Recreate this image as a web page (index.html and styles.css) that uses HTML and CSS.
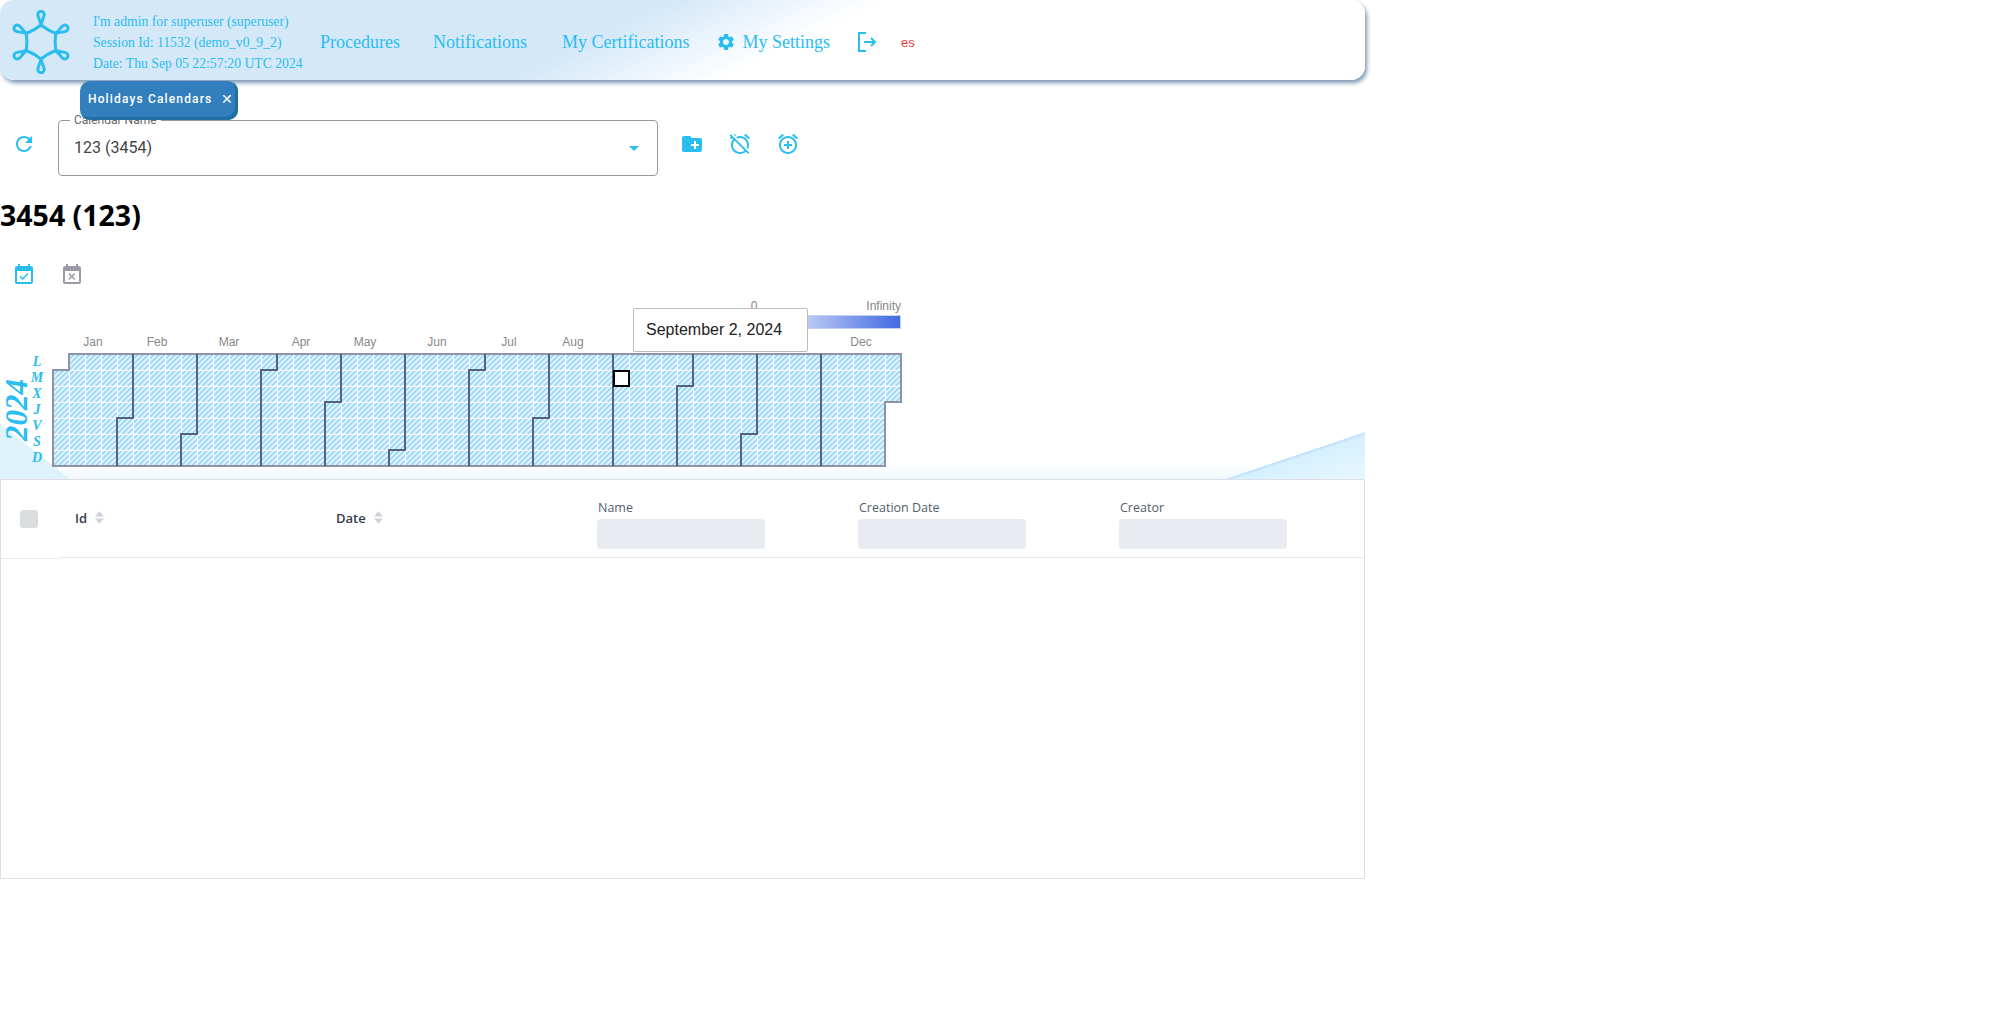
FILE: index.html
```html
<!DOCTYPE html>
<html lang="en">
<head>
  <meta charset="UTF-8" />
  <title>Holidays Calendars</title>
  <link rel="stylesheet" href="styles.css">
</head>
<body>
<div class="page">

  <!-- Top bar -->
  <header class="topbar">
    <svg class="logo" viewBox="-32 -32 64 64">
      <defs>
        <g id="logoArm">
          <path d="M0 -17C1 -22 3.2 -25 3.2 -27.5A3.2 3.2 0 0 0 -3.2 -27.5C-3.2 -25 -1 -22 0 -17" />
          <path d="M0 -17Q7 -11.5 14.7 -8.5" />
        </g>
      </defs>
      <use href="#logoArm" />
      <use href="#logoArm" transform="rotate(60)" />
      <use href="#logoArm" transform="rotate(120)" />
      <use href="#logoArm" transform="rotate(180)" />
      <use href="#logoArm" transform="rotate(240)" />
      <use href="#logoArm" transform="rotate(300)" />
    </svg>
    <div class="session-info">
      <div>I'm admin for superuser (superuser)</div>
      <div>Session Id: 11532 (demo_v0_9_2)</div>
      <div>Date: Thu Sep 05 22:57:20 UTC 2024</div>
    </div>
    <nav class="nav">
      <a class="nav-procedures">Procedures</a>
      <a class="nav-notifications">Notifications</a>
      <a class="nav-certs">My Certifications</a>
      <a class="nav-settings">
        <svg class="icon-cog" viewBox="0 0 24 24"><path d="M19.14 12.94c.04-.3.06-.61.06-.94 0-.32-.02-.64-.07-.94l2.03-1.58c.18-.14.23-.41.12-.61l-1.92-3.32c-.12-.22-.37-.29-.59-.22l-2.39.96c-.5-.38-1.03-.7-1.62-.94l-.36-2.54c-.04-.24-.24-.41-.48-.41h-3.84c-.24 0-.43.17-.47.41l-.36 2.54c-.59.24-1.13.57-1.62.94l-2.39-.96c-.22-.08-.47 0-.59.22L2.74 8.87c-.12.21-.08.47.12.61l2.03 1.58c-.05.3-.09.63-.09.94s.02.64.07.94l-2.03 1.58c-.18.14-.23.41-.12.61l1.92 3.32c.12.22.37.29.59.22l2.39-.96c.5.38 1.03.7 1.62.94l.36 2.54c.05.24.24.41.48.41h3.84c.24 0 .44-.17.47-.41l.36-2.54c.59-.24 1.13-.56 1.62-.94l2.39.96c.22.08.47 0 .59-.22l1.92-3.32c.12-.22.07-.47-.12-.61l-2.01-1.58zM12 15.6c-1.98 0-3.6-1.62-3.6-3.6s1.62-3.6 3.6-3.6 3.6 1.62 3.6 3.6-1.62 3.6-3.6 3.6z"/></svg>
        My Settings
      </a>
      <svg class="icon-logout" viewBox="0 0 20 20"><path d="M9 1H2V19H9M7 10H18M14 6L18 10L14 14" /></svg>
      <span class="lang">es</span>
    </nav>
  </header>

  <!-- Tabs -->
  <div class="tabs">
    <div class="tab">Holidays Calendars <span class="tab-close">✕</span></div>
  </div>

  <!-- Calendar selector -->
  <div class="toolbar">
    <svg class="icon" viewBox="0 0 24 24"><path d="M17.65 6.35C16.2 4.9 14.21 4 12 4c-4.42 0-7.99 3.58-7.99 8s3.57 8 7.99 8c3.73 0 6.84-2.55 7.73-6h-2.08c-.82 2.33-3.04 4-5.65 4-3.31 0-6-2.69-6-6s2.69-6 6-6c1.66 0 3.14.69 4.22 1.78L13 11h7V4l-2.35 2.35z"/></svg>
    <div class="select">
      <span class="select-label">Calendar Name</span>
      <span class="select-value">123 (3454)</span>
      <span class="select-arrow"></span>
    </div>
    <div class="toolbar-actions">
      <svg class="icon" viewBox="0 0 24 24"><path d="M20 6h-8l-2-2H4c-1.11 0-1.99.89-1.99 2L2 18c0 1.11.89 2 2 2h16c1.11 0 2-.89 2-2V8c0-1.11-.89-2-2-2zm-1 8h-3v3h-2v-3h-3v-2h3V9h2v3h3v2z"/></svg>
      <svg class="icon" viewBox="0 0 24 24"><path d="M12 6c3.87 0 7 3.13 7 7 0 .84-.16 1.65-.43 2.4l1.52 1.52c.58-1.19.91-2.51.91-3.92 0-4.97-4.03-9-9-9-1.41 0-2.73.33-3.92.91L9.6 6.43C10.35 6.16 11.16 6 12 6zm10-.28l-4.6-3.86-1.29 1.53 4.6 3.86zM2.92 2.29L1.65 3.57 3 4.9l-1.11.93 1.42 1.42 1.11-.94.8.8C3.83 8.69 3 10.75 3 13c0 4.97 4.02 9 9 9 2.25 0 4.31-.83 5.89-2.2l2.2 2.2 1.27-1.27L3.89 3.27l-.97-.98zm13.55 16.1C15.26 19.39 13.7 20 12 20c-3.87 0-7-3.13-7-7 0-1.7.61-3.26 1.61-4.47l9.86 9.86zM8.02 3.28L6.6 1.86l-.86.71 1.42 1.42z"/></svg>
      <svg class="icon" viewBox="0 0 24 24"><path d="M7.88 3.39L6.6 1.86 2 5.71l1.29 1.53 4.59-3.85zM22 5.72l-4.6-3.86-1.29 1.53 4.6 3.86L22 5.72zM12 4c-4.97 0-9 4.03-9 9s4.02 9 9 9c4.97 0 9-4.03 9-9s-4.03-9-9-9zm0 16c-3.87 0-7-3.13-7-7s3.13-7 7-7 7 3.13 7 7-3.13 7-7 7zm1-11h-2v3H8v2h3v3h2v-3h3v-2h-3V9z"/></svg>
    </div>
  </div>

  <h2 class="calendar-title">3454 (123)</h2>

  <div class="day-actions">
    <svg class="icon" viewBox="0 0 24 24"><path d="M16.53 11.06L15.47 10l-4.88 4.88-2.12-2.12-1.06 1.06L10.59 17l5.94-5.94zM19 3h-1V1h-2v2H8V1H6v2H5c-1.11 0-1.99.9-1.99 2L3 19c0 1.1.89 2 2 2h14c1.1 0 2-.9 2-2V5c0-1.1-.9-2-2-2zm0 16H5V8h14v11z"/></svg>
    <svg class="icon icon-muted" viewBox="0 0 24 24"><path d="M9.31 17l2.44-2.44L14.19 17l1.06-1.06-2.44-2.44 2.44-2.44L14.19 10l-2.44 2.44L9.31 10l-1.06 1.06 2.44 2.44-2.44 2.44L9.31 17zM19 3h-1V1h-2v2H8V1H6v2H5c-1.11 0-1.99.9-1.99 2L3 19c0 1.1.89 2 2 2h14c1.1 0 2-.9 2-2V5c0-1.1-.9-2-2-2zm0 16H5V8h14v11z"/></svg>
  </div>

  <!-- Year heatmap -->
  <section class="heatmap">
    <svg class="heatmap-svg" width="920" height="179" viewBox="0 0 920 179">
      <defs>
        <pattern id="cell" x="53" y="54" width="16" height="16" patternUnits="userSpaceOnUse">
          <rect width="16" height="16" fill="#e6f3fd" />
          <path d="M0 5.33L5.33 0M0 10.67L10.67 0M0 16L16 0M5.33 16L16 5.33M10.67 16L16 10.67" stroke="#98daf7" stroke-width="1.8" />
          <path d="M0 0H16M0 0V16" stroke="#fbfdff" stroke-width="2" />
        </pattern>
        <linearGradient id="legendScale">
          <stop offset="0" stop-color="#ffffff" />
          <stop offset="1" stop-color="#4169e1" />
        </linearGradient>
      </defs>

      <text class="year" transform="translate(27 141) rotate(-90)">2024</text>
      <text class="weekday" x="37" y="66">L</text>
      <text class="weekday" x="37" y="82">M</text>
      <text class="weekday" x="37" y="98">X</text>
      <text class="weekday" x="37" y="114">J</text>
      <text class="weekday" x="37" y="130">V</text>
      <text class="weekday" x="37" y="146">S</text>
      <text class="weekday" x="37" y="162">D</text>

      <text class="month" x="93" y="46">Jan</text>
      <text class="month" x="157" y="46">Feb</text>
      <text class="month" x="229" y="46">Mar</text>
      <text class="month" x="301" y="46">Apr</text>
      <text class="month" x="365" y="46">May</text>
      <text class="month" x="437" y="46">Jun</text>
      <text class="month" x="509" y="46">Jul</text>
      <text class="month" x="573" y="46">Aug</text>
      <text class="month" x="645" y="46">Sep</text>
      <text class="month" x="709" y="46">Oct</text>
      <text class="month" x="781" y="46">Nov</text>
      <text class="month" x="861" y="46">Dec</text>

      <text class="legend" x="754" y="10">0</text>
      <text class="legend legend-end" x="901" y="10">Infinity</text>
      <rect class="legend-bar" x="754.5" y="15.5" width="146" height="13" />

      <path class="days" d="M69 54H901V102H885V166H53V70H69Z" />
      <path class="month-lines" d="M133 54V118H117V166M197 54V134H181V166M277 54V70H261V166M341 54V102H325V166M405 54V150H389V166M485 54V70H469V166M549 54V118H533V166M613 54V166M693 54V86H677V166M757 54V134H741V166M821 54V166" />
      <rect class="selected-day" x="614" y="71" width="15" height="15" />
    </svg>
    <div class="day-tooltip">September 2, 2024</div>
  </section>

  <!-- Days table -->
  <div class="grid">
    <div class="grid-head">
      <div class="cell cell-check"><span class="checkbox"></span></div>
      <div class="cell cell-sort">Id
        <svg class="sort" viewBox="0 0 10 14"><path d="M5 0L10 6H0ZM5 14L0 8H10Z" /></svg>
      </div>
      <div class="cell cell-sort">Date
        <svg class="sort" viewBox="0 0 10 14"><path d="M5 0L10 6H0ZM5 14L0 8H10Z" /></svg>
      </div>
      <div class="cell cell-filter">
        <label>Name</label>
        <span class="filter-input"></span>
      </div>
      <div class="cell cell-filter">
        <label>Creation Date</label>
        <span class="filter-input"></span>
      </div>
      <div class="cell cell-filter">
        <label>Creator</label>
        <span class="filter-input"></span>
      </div>
    </div>
  </div>

</div>
</body>
</html>
```

FILE: styles.css
```css
body {
  margin: 0;
  background: #fff;
  font-family: 'Liberation Sans', sans-serif;
}
.page {
  width: 1365px;
}

/* top bar */
.topbar {
  box-sizing: border-box;
  height: 80px;
  padding: 4px 0 0 9px;
  display: flex;
  align-items: center;
  border-radius: 14px;
  background: linear-gradient(154deg, #d4e8f8 44%, #fff 58%);
  box-shadow: 2px 3px 4px rgba(70, 110, 150, 0.7);
  color: #2abdf0;
  font-family: 'Liberation Serif', serif;
}
.logo {
  width: 64px;
  height: 64px;
  margin-right: 20px;
  fill: none;
  stroke: #2abdf0;
  stroke-width: 3;
}
.session-info {
  width: 227px;
  font-size: 13.7px;
  line-height: 21px;
  white-space: nowrap;
}
.nav {
  display: flex;
  align-items: center;
  font-size: 18px;
}
.nav-notifications {
  margin-left: 33px;
}
.nav-certs {
  margin-left: 35px;
}
.nav-settings {
  margin-left: 27px;
  display: flex;
  align-items: center;
  gap: 6px;
}
.icon-cog {
  width: 20px;
  height: 20px;
  fill: #2abdf0;
}
.icon-logout {
  width: 20px;
  height: 20px;
  margin-left: 27px;
  fill: none;
  stroke: #2abdf0;
  stroke-width: 2;
}
.lang {
  margin-left: 24px;
  color: #e53935;
  font-family: 'Liberation Sans', sans-serif;
  font-size: 13px;
}

/* tabs */
.tabs {
  height: 39px;
  margin-top: 1px;
  padding-left: 80px;
  display: flex;
}
.tab {
  position: relative;
  z-index: 2;
  box-sizing: border-box;
  width: 158px;
  height: 39px;
  padding: 0 0 3px 8px;
  display: flex;
  align-items: center;
  gap: 9px;
  border-radius: 10px;
  background: #337fbd;
  box-shadow: inset -3px -3px 0 #1f6fa5;
  color: #fff;
  font-family: Roboto, sans-serif;
  font-size: 12px;
  font-weight: 500;
  letter-spacing: 1.15px;
  white-space: nowrap;
}
.tab-close {
  font-size: 14px;
  letter-spacing: 0;
}

/* selector row */
.icon {
  width: 24px;
  height: 24px;
  fill: #2abdf0;
  flex: none;
}
.icon-muted {
  fill: #9b9ba8;
}
.toolbar {
  height: 55px;
  padding-left: 12px;
  display: flex;
  align-items: flex-start;
}
.toolbar > .icon,
.toolbar-actions {
  margin-top: 12px;
}
.select {
  position: relative;
  box-sizing: border-box;
  width: 600px;
  height: 56px;
  margin-left: 22px;
  padding: 0 15px 2px;
  display: flex;
  align-items: center;
  border: 1px solid #999;
  border-radius: 4px;
}
.select-label {
  position: absolute;
  left: 11px;
  top: -8px;
  padding: 0 4px;
  background: #fff;
  color: #666;
  font-family: Roboto, sans-serif;
  font-size: 12px;
}
.select-value {
  color: #444;
  font-family: Roboto, sans-serif;
  font-size: 16px;
}
.select-arrow {
  position: absolute;
  right: 18px;
  top: 25px;
  border-left: 5px solid transparent;
  border-right: 5px solid transparent;
  border-top: 5px solid #2abdf0;
}
.toolbar-actions {
  margin-left: 22px;
  display: flex;
  gap: 24px;
}

.calendar-title {
  margin: 21px 0 0;
  color: #000;
  font-family: 'Open Sans', sans-serif;
  font-size: 28.5px;
  font-weight: 700;
  line-height: 38px;
}
.day-actions {
  height: 37px;
  margin-top: 29px;
  padding-left: 12px;
  display: flex;
  align-items: flex-start;
  gap: 24px;
}

/* heatmap */
.heatmap {
  position: relative;
  height: 179px;
  background:
    linear-gradient(to top right, #dff3fd 50%, transparent 50%) left bottom / 70px 55px no-repeat,
    linear-gradient(to bottom right, transparent 50%, #bcdfff 50.5%, #d6f0ff 54%, #e8f7ff 100%) right bottom / 140px 47px no-repeat,
    linear-gradient(to top, #f1f9fe, #fff) left bottom / 100% 16px no-repeat;
}
.heatmap-svg {
  display: block;
}
.year {
  fill: #2abdf0;
  font-family: 'Liberation Serif', serif;
  font-size: 31px;
  font-style: italic;
  font-weight: 700;
}
.weekday {
  fill: #2abdf0;
  font-family: 'Liberation Serif', serif;
  font-size: 14px;
  font-style: italic;
  font-weight: 700;
  text-anchor: middle;
}
.month,
.legend {
  fill: #888;
  font-size: 12px;
  text-anchor: middle;
}
.legend-end {
  text-anchor: end;
}
.legend-bar {
  fill: url(#legendScale);
  stroke: #c5d2f5;
}
.days {
  fill: url(#cell);
  stroke: #9191a8;
  stroke-width: 2;
}
.month-lines {
  fill: none;
  stroke: #57607f;
  stroke-width: 2;
}
.selected-day {
  fill: #fff;
  stroke: #000;
  stroke-width: 2;
}
.day-tooltip {
  position: absolute;
  left: 633px;
  top: 8px;
  box-sizing: border-box;
  width: 175px;
  height: 44px;
  padding-left: 12px;
  display: flex;
  align-items: center;
  border: 1px solid #bbb;
  border-radius: 2px;
  background: #fff;
  color: #222;
  font-size: 16px;
}

/* table */
.grid {
  box-sizing: border-box;
  height: 400px;
  border: 1px solid #dde0e3;
}
.grid-head {
  display: grid;
  grid-template-columns: 58px repeat(5, 261px);
  color: #333c4a;
  font-family: 'Open Sans', sans-serif;
}
.cell {
  box-sizing: border-box;
  height: 78px;
  padding-left: 16px;
  border-bottom: 1px solid #e7e9ec;
}
.cell-check {
  height: 79px;
  padding-left: 19px;
  display: flex;
  align-items: center;
}
.checkbox {
  width: 18px;
  height: 18px;
  border-radius: 3px;
  background: #dadde0;
}
.cell-sort {
  padding-bottom: 2px;
  display: flex;
  align-items: center;
  gap: 8px;
  font-size: 13px;
  font-weight: 600;
}
.sort {
  width: 9px;
  height: 13px;
  fill: #cfd2d8;
}
.cell-filter {
  padding-top: 19px;
}
.cell-filter label {
  display: block;
  height: 20px;
  padding-left: 1px;
  color: #555e6c;
  font-size: 12.5px;
  line-height: 18px;
}
.filter-input {
  display: block;
  width: 168px;
  height: 30px;
  border-radius: 4px;
  background: #e8ebef;
}
```
